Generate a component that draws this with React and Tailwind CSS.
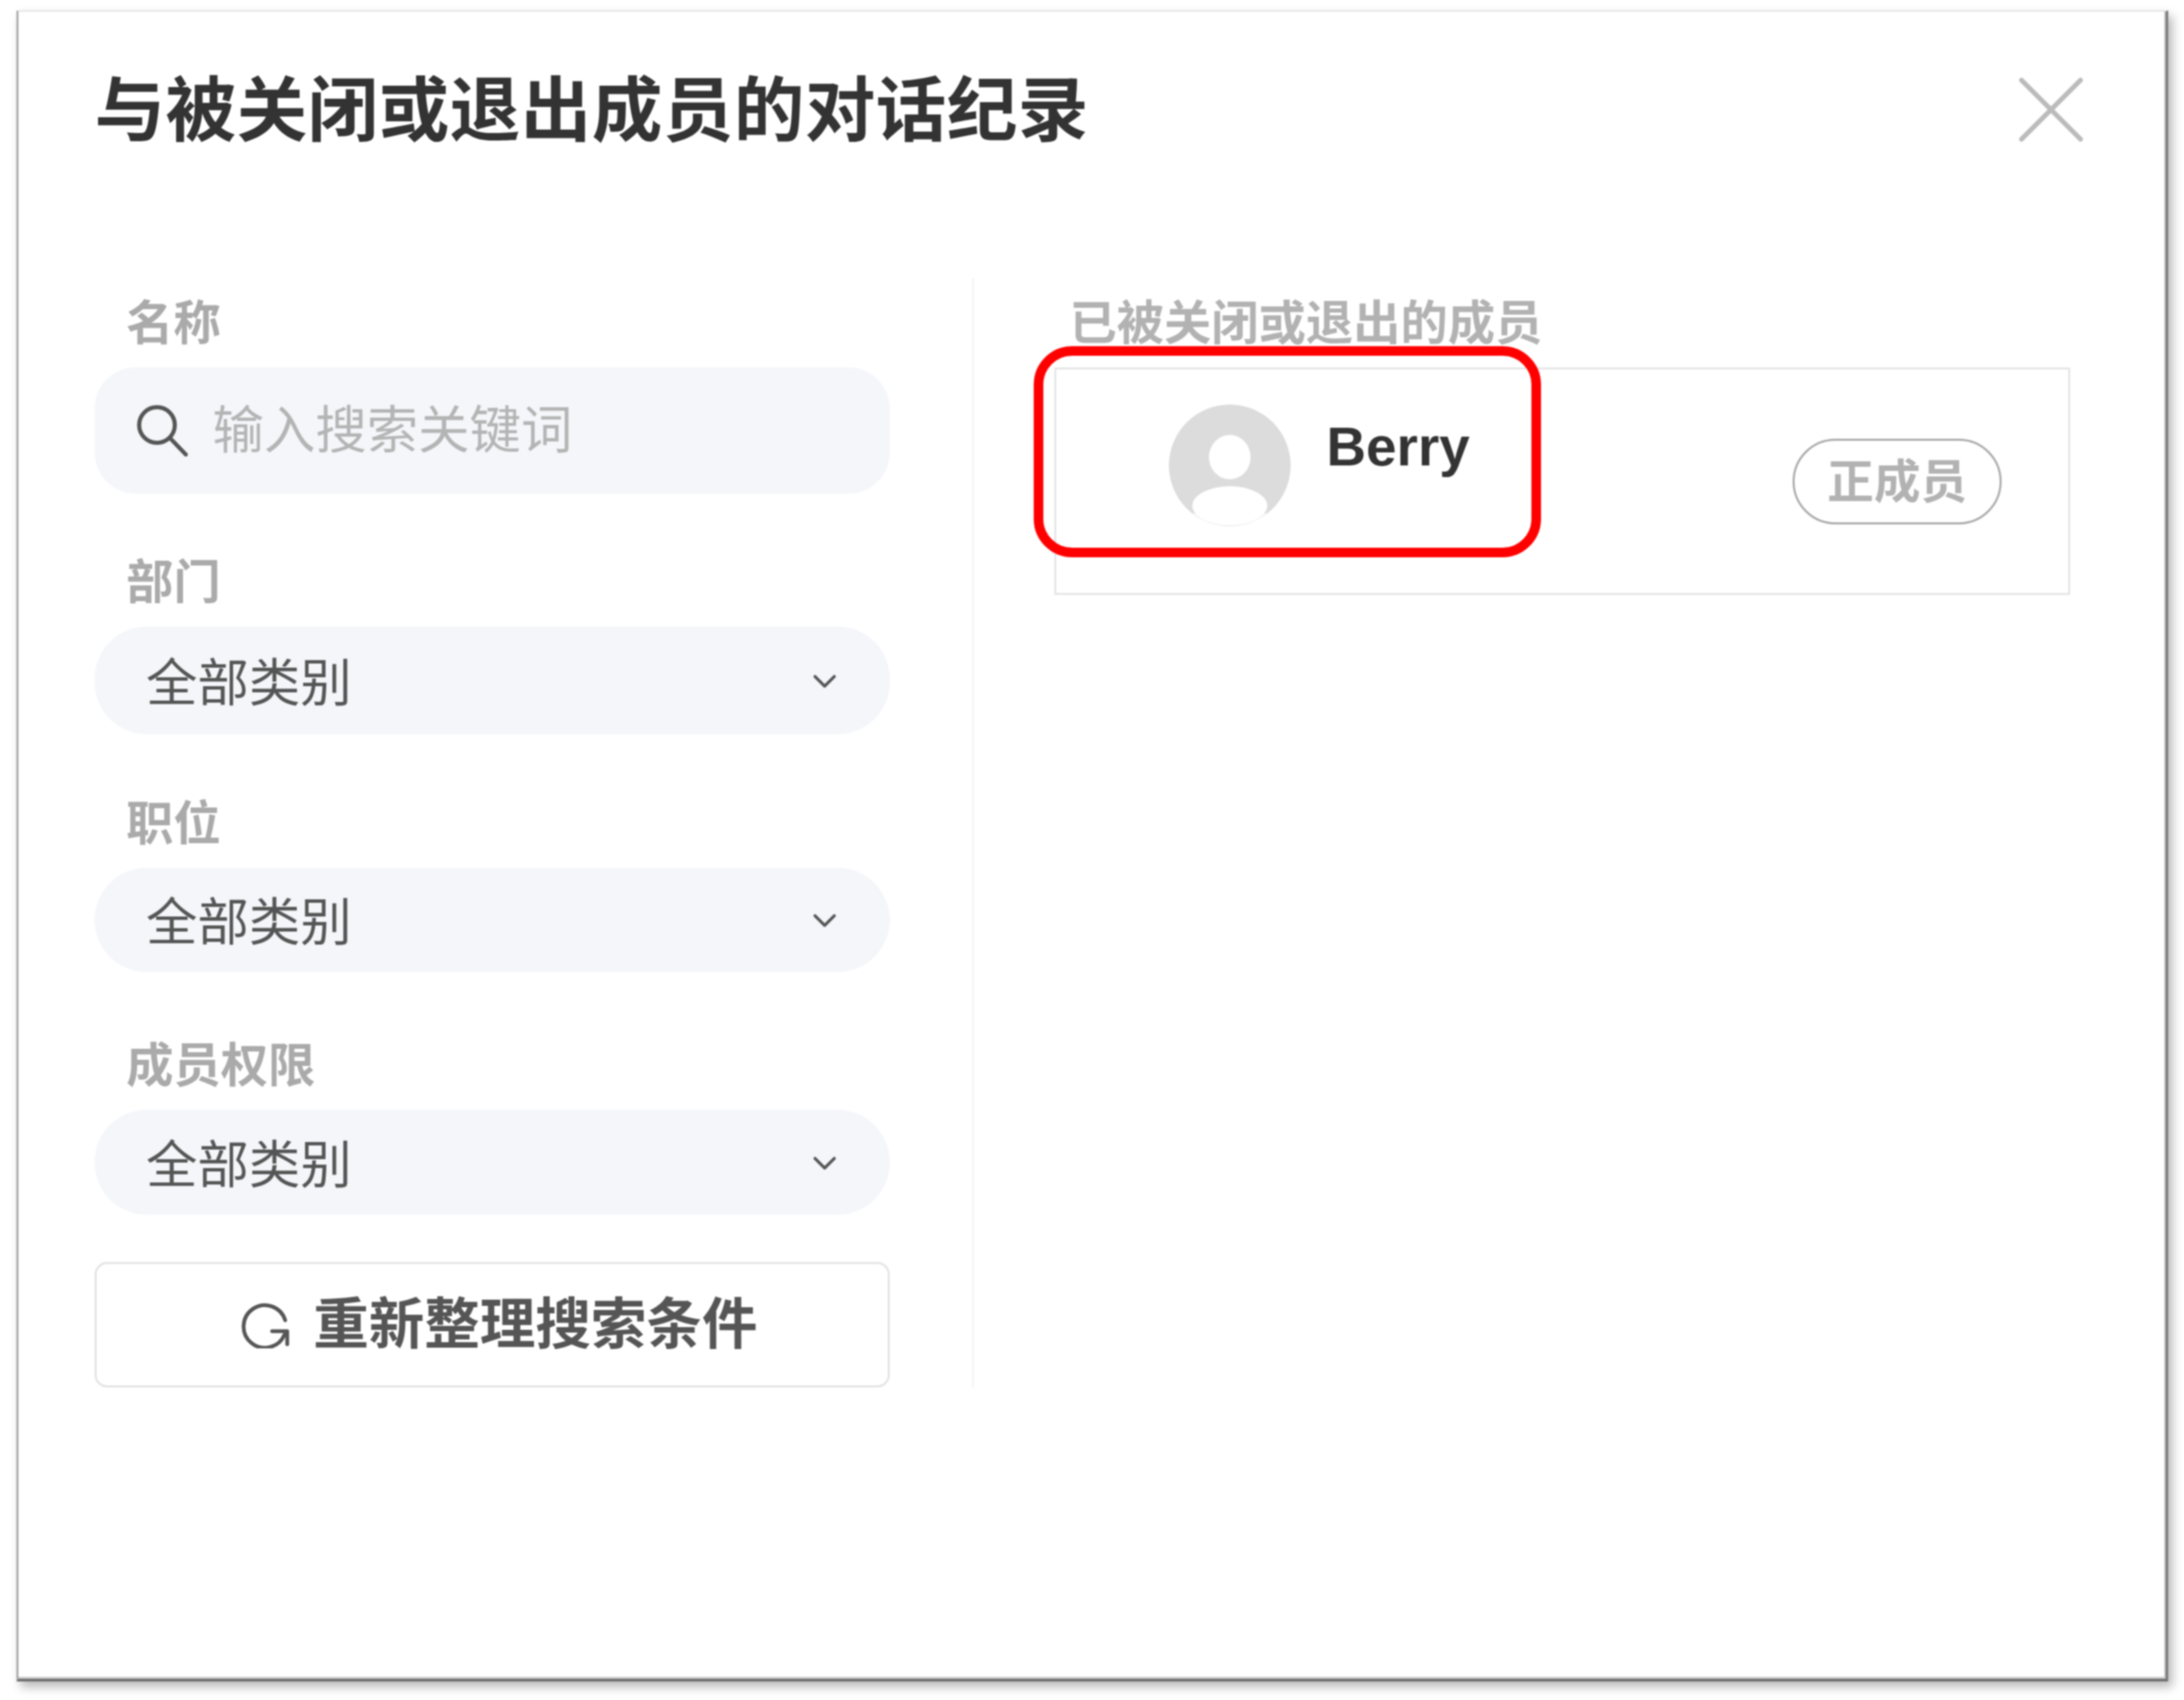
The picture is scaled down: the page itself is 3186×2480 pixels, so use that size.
const font = { fontFamily: '"Liberation Sans", "Noto Sans CJK SC", sans-serif' };

function Chevron() {
  return (
    <svg width="34" height="22" viewBox="0 0 34 22" fill="none" stroke="#555" strokeWidth="4.5" strokeLinecap="round" strokeLinejoin="round">
      <path d="M3 5 L17 19 L31 5" />
    </svg>
  );
}

function Field({ label, h, mt }) {
  return (
    <div className={mt}>
      <div className="h-[80px] pl-[46px] text-[69px] leading-[84px] font-bold text-[#aaaaaa]">{label}</div>
      <div className={`${h} mt-[25px] flex items-center justify-between rounded-[76px] bg-[#f4f6fa] pl-[75px] pr-[78px]`}>
        <span className="mt-[9px] text-[75px] leading-none text-[#555555]">全部类别</span>
        <Chevron />
      </div>
    </div>
  );
}

export default function App() {
  return (
    <div className="h-[2480px] w-[3186px] overflow-hidden bg-white pl-[24px] pt-[15px] blur-[1px]" style={font}>
      <div className="h-[2438px] w-[3139px] border-t-2 border-r-[4px] border-b-[4px] border-l-[3px] border-t-[#e2e2e2] border-r-[#7f7f7f] border-b-[#707070] border-l-[#aaaaaa] bg-white pl-[111px] pr-[118px] pt-[94px] shadow-[inset_-2px_-3px_0_#cfcfcf,6px_8px_14px_rgba(0,0,0,0.28)]">
        <div className="flex h-[103px] items-center justify-between">
          <h1 className="text-[103px] leading-none font-bold tracking-[0.6px] text-[#333333]">与被关闭或退出成员的对话纪录</h1>
          <svg className="mb-[5px] mr-[2px]" width="94" height="94" viewBox="0 0 94 94" fill="none" stroke="#bbbbbb" strokeWidth="7" strokeLinecap="round">
            <path d="M4 4 L90 90 M90 4 L4 90" />
          </svg>
        </div>

        <div className="mt-[192px] flex">
          <div className="w-[1160px] pt-[25px]">
            <div>
              <div className="h-[80px] pl-[46px] text-[69px] leading-[84px] font-bold text-[#aaaaaa]">名称</div>
              <div className="mt-[25px] flex h-[184px] items-center rounded-[60px] bg-[#f4f6fa] pl-[61px]">
                <svg width="76" height="76" viewBox="0 0 76 76" fill="none" stroke="#555" strokeWidth="6" strokeLinecap="round">
                  <circle cx="30" cy="30" r="26" />
                  <path d="M49 49 L72 73" />
                </svg>
                <span className="ml-[35px] text-[75px] leading-none text-[#b4b4b4]">输入搜索关键词</span>
              </div>
            </div>
            <Field label="部门" h="h-[157px]" mt="mt-[89px]" />
            <Field label="职位" h="h-[152px]" mt="mt-[90px]" />
            <Field label="成员权限" h="h-[153px]" mt="mt-[96px]" />
            <button className="mt-[69px] flex h-[183px] w-full items-center justify-center rounded-[18px] border-[3px] border-[#e4e4e4] bg-white pl-[21px]">
              <svg width="70" height="68" viewBox="0 0 70 68" fill="none" stroke="#555" strokeWidth="5.5" strokeLinecap="round" strokeLinejoin="round">
                <path d="M64 27 A31 31 0 1 0 63 48" />
                <path d="M45 43 L67 43 L67 62" />
              </svg>
              <span className="ml-[35px] text-[81px] leading-none font-bold text-[#555555]">重新整理搜索条件</span>
            </button>
          </div>

          <div className="ml-[120px] w-[3px] bg-[#f4f4f4]" />

          <div className="ml-[117px] w-[1482px] pt-[25px]">
            <div className="relative">
              <div className="h-[80px] pl-[22px] text-[69px] leading-[84px] font-bold text-[#b2b2b2]">已被关闭或退出的成员</div>
              <div className="mt-[25px] flex h-[332px] items-start border-[3px] border-[#e6e6e6] pl-[164px] pr-[97px]">
                <svg className="mt-[50px] shrink-0" width="178" height="180" viewBox="0 0 176 178">
                  <defs>
                    <clipPath id="avatar-clip"><circle cx="88" cy="89" r="88" /></clipPath>
                  </defs>
                  <g clipPath="url(#avatar-clip)">
                    <circle cx="88" cy="89" r="88" fill="#dcdcdc" />
                    <rect x="0" y="158" width="176" height="20" fill="#f3f3f3" />
                    <ellipse cx="88" cy="77" rx="30" ry="32" fill="#ffffff" />
                    <ellipse cx="88" cy="147" rx="54" ry="28" fill="#ffffff" />
                  </g>
                </svg>
                <span className="ml-[52px] mt-[73px] text-[80px] leading-none font-bold text-[#333333]">Berry</span>
                <span className="ml-auto mt-[101px] flex h-[125px] w-[305px] items-center justify-center rounded-full border-[3px] border-[#aaaaaa] text-[68px] leading-none font-bold text-[#b2b2b2]">正成员</span>
              </div>
              <div className="absolute left-[-30px] top-[74px] h-[308px] w-[740px] rounded-[56px] border-[14px] border-[#ff0000]" />
            </div>
          </div>
        </div>
      </div>
    </div>
  );
}
